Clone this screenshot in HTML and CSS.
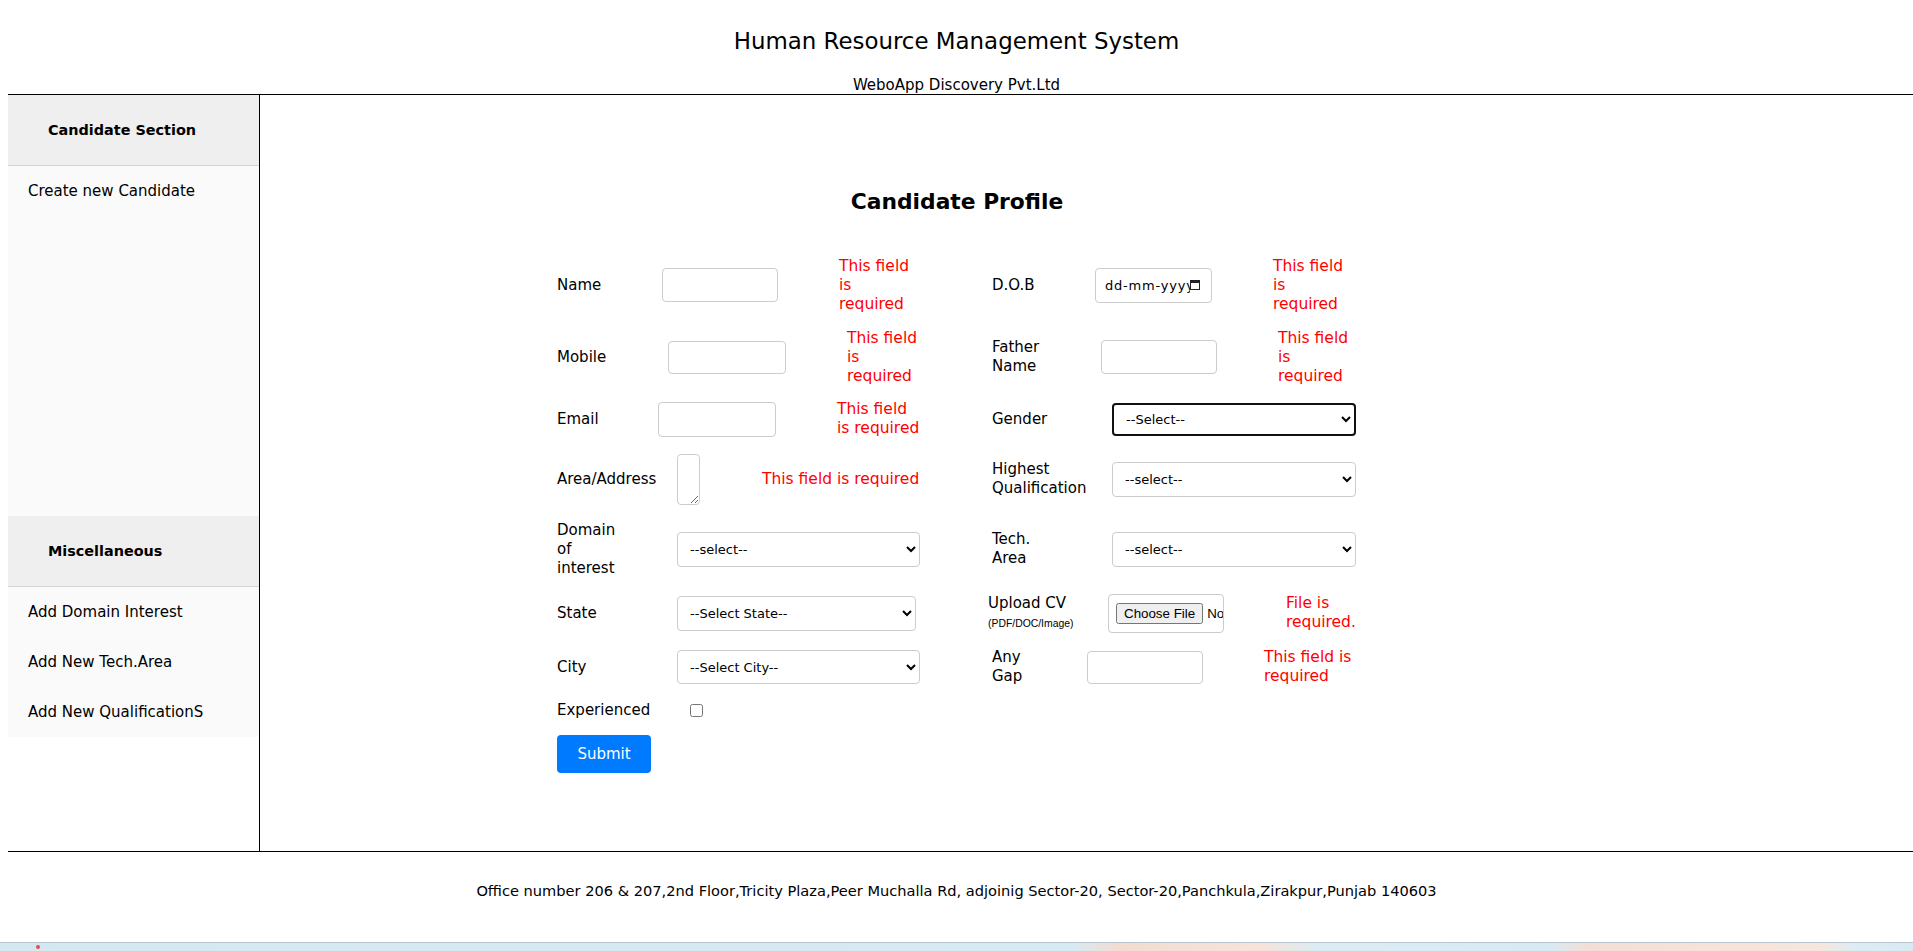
FILE: index.html
```html
<!DOCTYPE html>
<html lang="en">
<head>
<meta charset="utf-8">
<title>Human Resource Management System</title>
<link rel="stylesheet" href="styles.css">
</head>
<body>
<header class="top">
  <h1 class="app-title">Human Resource Management System</h1>
  <p class="company">WeboApp Discovery Pvt.Ltd</p>
</header>

<div class="layout">
  <aside class="sidebar">
    <div class="side-head">Candidate Section</div>
    <ul class="side-list side-list-main">
      <li>Create new Candidate</li>
    </ul>
    <div class="side-head">Miscellaneous</div>
    <ul class="side-list">
      <li>Add Domain Interest</li>
      <li>Add New Tech.Area</li>
      <li>Add New QualificationS</li>
    </ul>
  </aside>

  <main class="main">
    <div class="profile">
      <h2 class="profile-title">Candidate Profile</h2>
      <form class="form-grid">
        <!-- row 1 -->
        <div class="field">
          <label class="lbl lbl-name">Name</label>
          <input class="txt" type="text">
          <span class="err err-narrow">This field is required</span>
        </div>
        <div class="field">
          <label class="lbl lbl-dob">D.O.B</label>
          <div class="date-field"><span class="date-text">dd-mm-yyyy</span><svg class="cal" width="10" height="10" viewBox="0 0 10 10"><rect x="0.5" y="0.5" width="9" height="9" fill="none" stroke="#222" stroke-width="1"/><rect x="0" y="0" width="10" height="3" fill="#222"/></svg></div>
          <span class="err err-narrow">This field is required</span>
        </div>
        <!-- row 2 -->
        <div class="field">
          <label class="lbl lbl-mobile">Mobile</label>
          <input class="txt txt-wide txt-33" type="text">
          <span class="err err-narrow">This field is required</span>
        </div>
        <div class="field">
          <label class="lbl lbl-father">Father Name</label>
          <input class="txt" type="text">
          <span class="err err-narrow">This field is required</span>
        </div>
        <!-- row 3 -->
        <div class="field">
          <label class="lbl lbl-email">Email</label>
          <input class="txt txt-wide txt-35" type="email">
          <span class="err err-mid">This field is required</span>
        </div>
        <div class="field">
          <label class="lbl lbl-sel">Gender</label>
          <select class="sel sel-focus"><option>--Select--</option></select>
        </div>
        <!-- row 4 -->
        <div class="field">
          <label class="lbl lbl-sel">Area/Address</label>
          <textarea class="area"></textarea>
          <span class="err err-line">This field is required</span>
        </div>
        <div class="field">
          <label class="lbl lbl-sel">Highest Qualification</label>
          <select class="sel"><option>--select--</option></select>
        </div>
        <!-- row 5 -->
        <div class="field">
          <label class="lbl lbl-sel lbl-domain">Domain of interest</label>
          <select class="sel sel-left"><option>--select--</option></select>
        </div>
        <div class="field">
          <label class="lbl lbl-sel lbl-tech">Tech. Area</label>
          <select class="sel"><option>--select--</option></select>
        </div>
        <!-- row 6 -->
        <div class="field">
          <label class="lbl lbl-sel">State</label>
          <select class="sel sel-state"><option>--Select State--</option></select>
        </div>
        <div class="field field-upload">
          <label class="lbl lbl-sel">Upload CV<br><small class="hint">(PDF/DOC/Image)</small></label>
          <input class="file" type="file">
          <span class="err err-narrow err-file">File is required.</span>
        </div>
        <!-- row 7 -->
        <div class="field">
          <label class="lbl lbl-sel">City</label>
          <select class="sel sel-left sel-34"><option>--Select City--</option></select>
        </div>
        <div class="field">
          <label class="lbl lbl-gap">Any Gap</label>
          <input class="txt txt-33" type="text">
          <span class="err err-wide">This field is required</span>
        </div>
        <!-- row 8 -->
        <div class="field">
          <label class="lbl lbl-exp">Experienced</label>
          <input class="check" type="checkbox">
        </div>
        <div class="field"></div>
      </form>
      <button class="submit" type="button">Submit</button>
    </div>
  </main>
</div>

<footer class="footer">Office number 206 &amp; 207,2nd Floor,Tricity Plaza,Peer Muchalla Rd, adjoinig Sector-20, Sector-20,Panchkula,Zirakpur,Punjab 140603</footer>
<div class="strip"><span class="strip-mark"></span></div>
</body>
</html>
```

FILE: styles.css
```css
* { box-sizing: border-box; }

html, body { height: 100%; }

body {
  margin: 0;
  font-family: "DejaVu Sans", "Noto Sans", sans-serif;
  font-size: 15px;
  color: #000;
  background: #fff;
  overflow: hidden;
}

/* header */
.top {
  text-align: center;
  padding-top: 27px;
}
.app-title {
  margin: 0;
  font-size: 22.9px;
  font-weight: normal;
  line-height: 28px;
}
.company {
  margin: 21px 0 0;
  font-size: 15px;
  line-height: 18px;
}

/* layout */
.layout {
  display: flex;
  margin-left: 8px;
  height: 758px;
  border-top: 1px solid #000;
  border-bottom: 1px solid #000;
}

.sidebar {
  flex: none;
  width: 252px;
  border-right: 1px solid #000;
}
.side-head {
  height: 71px;
  display: flex;
  align-items: center;
  padding-left: 40px;
  background: #efefef;
  border-bottom: 1px solid #d4d4d4;
  font-size: 14.4px;
  font-weight: bold;
}
.side-list {
  list-style: none;
  margin: 0;
  padding: 0;
  background: #fafafa;
}
.side-list li {
  height: 50px;
  line-height: 50px;
  padding-left: 20px;
}
.side-list-main { height: 350px; }

/* main */
.main {
  flex: 1;
  padding: 94px 0 0 297px;
}
.profile { width: 800px; }
.profile-title {
  margin: 0;
  text-align: center;
  font-size: 21.8px;
  line-height: 26px;
  font-weight: bold;
}

.form-grid {
  display: grid;
  grid-template-columns: 435px 365px;
  grid-template-rows: 72px 72px 52px 68px 72px 56px 52px 34px;
  margin-top: 34px;
}
.field {
  display: flex;
  align-items: center;
}
.field-upload { margin-left: -4px; }

.lbl {
  flex: none;
  line-height: 19px;
}
.lbl-name { width: 105px; }
.lbl-mobile { width: 111px; }
.lbl-email { width: 101px; }
.lbl-dob { width: 103px; }
.lbl-father { width: 109px; padding-right: 49px; }
.lbl-sel { width: 120px; }
.lbl-domain { padding-right: 55px; }
.lbl-tech { padding-right: 60px; }
.lbl-gap { width: 95px; padding-right: 50px; }
.lbl-exp { width: 133px; }

.hint {
  font-family: "Liberation Sans", Arial, sans-serif;
  font-size: 10.4px;
}

.txt {
  flex: none;
  width: 116px;
  height: 34px;
  padding: 0 8px;
  border: 1px solid #cccccc;
  border-radius: 4px;
  font: inherit;
  background: #fff;
}
.txt-wide { width: 118px; }
.txt-33 { height: 33px; }
.txt-35 { height: 35px; }

.date-field {
  flex: none;
  display: flex;
  align-items: center;
  width: 117px;
  height: 35px;
  padding: 0 11px 0 9px;
  border: 1px solid #cccccc;
  border-radius: 4px;
  font-size: 13px;
  letter-spacing: 0.8px;
}
.date-text {
  flex: 1;
  overflow: hidden;
  white-space: nowrap;
}
.cal { flex: none; }

.area {
  flex: none;
  width: 23px;
  height: 51px;
  border: 1px solid #cccccc;
  border-radius: 4px;
}

.sel {
  flex: none;
  width: 244px;
  height: 35px;
  padding: 0 8px;
  border: 1px solid #cccccc;
  border-radius: 4px;
  background: #fff;
  font-family: "DejaVu Sans", sans-serif;
  font-size: 13px;
  color: #000;
}
.sel-left { width: 243px; }
.sel-state { width: 239px; }
.sel-34 { height: 34px; }
.sel-focus {
  height: 33px;
  border: 2px solid #111;
}

.file {
  flex: none;
  width: 116px;
  height: 39px;
  padding: 8px 7px;
  border: 1px solid #cccccc;
  border-radius: 4px;
  overflow: hidden;
  font-family: "Liberation Sans", Arial, sans-serif;
  font-size: 13.33px;
}

.check {
  margin: 0;
  width: 13px;
  height: 13px;
}

.err {
  flex: none;
  margin-left: 61px;
  color: #ff0000;
  font-size: 15.5px;
  line-height: 19px;
}
.err-narrow { width: 75px; }
.err-mid { width: 85px; }
.err-wide { width: 92px; }
.err-line { margin-left: 62px; white-space: nowrap; }
.err-file { margin-left: 62px; }

.submit {
  display: block;
  margin-top: 8px;
  width: 94px;
  height: 38px;
  border: none;
  border-radius: 4px;
  background: #007bff;
  color: #fff;
  font-family: "DejaVu Sans", sans-serif;
  font-size: 15px;
}

/* footer */
.footer {
  height: 90px;
  padding-top: 30px;
  text-align: center;
  font-size: 14.6px;
  line-height: 18px;
}

.strip {
  position: relative;
  height: 9px;
  border-top: 1px solid #b9c6ce;
  background: linear-gradient(90deg, #d4e8f2 0%, #d7eaf4 56%, #f2dcd2 58.5%, #f6e3da 66%, #dbecf4 69%, #d7eaf4 81%, #f3ded5 83%, #f7e6dd 95%, #dcecf4 97%, #d7eaf4 100%);
}
.strip-mark {
  position: absolute;
  left: 36px;
  top: 2px;
  width: 4px;
  height: 4px;
  border-radius: 2px;
  background: #e05050;
}
```
